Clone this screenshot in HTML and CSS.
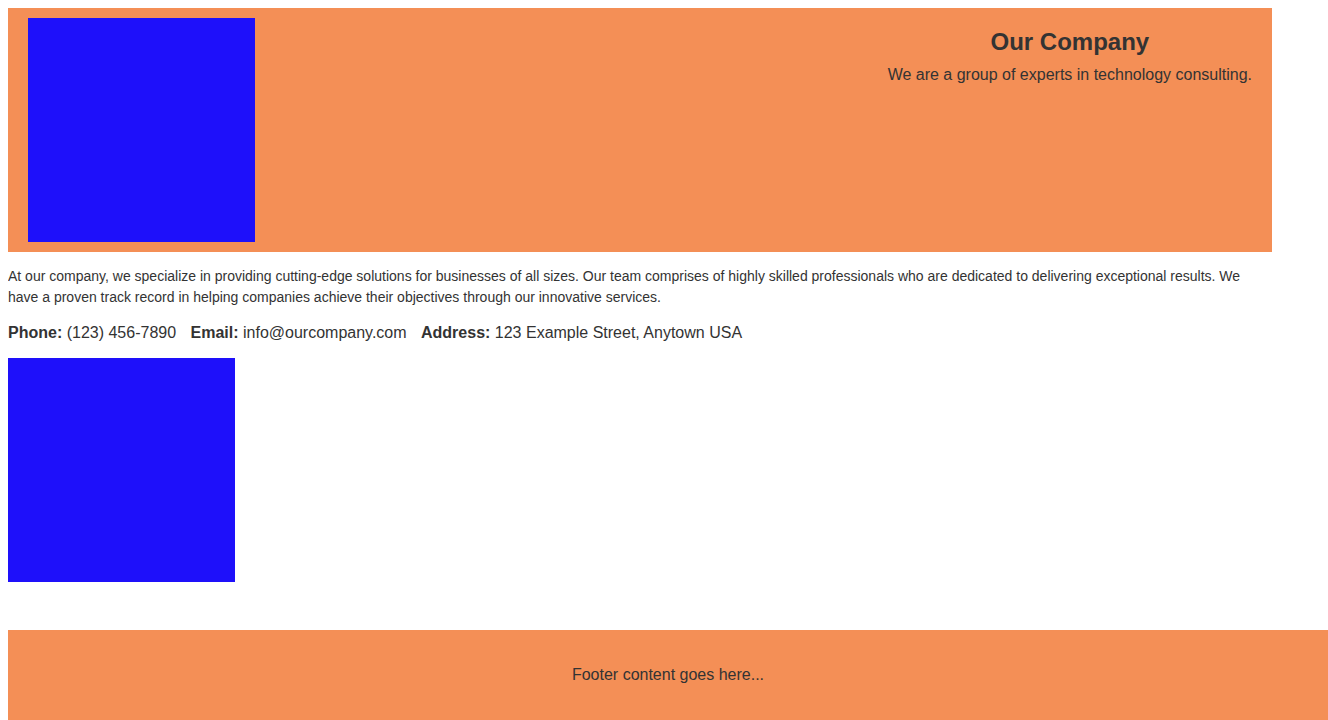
FILE: index.html
```html
<!DOCTYPE html>
<html lang="en">
<head>
<meta charset="utf-8">
<title>Our Company</title>
<link rel="stylesheet" href="styles.css">
</head>
<body>
<header class="site-header">
  <div class="logo"></div>
  <div class="brand">
    <h1 class="brand-title">Our Company</h1>
    <p class="brand-tagline">We are a group of experts in technology consulting.</p>
  </div>
</header>
<main class="content">
  <p class="intro">At our company, we specialize in providing cutting-edge solutions for businesses of all sizes. Our team comprises of highly skilled professionals who are dedicated to delivering exceptional results. We have a proven track record in helping companies achieve their objectives through our innovative services.</p>
  <p class="contact"><span class="contact-item"><strong>Phone:</strong> (123) 456-7890</span> <span class="contact-item"><strong>Email:</strong> info@ourcompany.com</span> <span class="contact-item"><strong>Address:</strong> 123 Example Street, Anytown USA</span></p>
  <div class="picture"></div>
</main>
<footer class="site-footer">
  <p class="footer-text">Footer content goes here...</p>
</footer>
</body>
</html>
```
FILE: styles.css
```css
html, body {
  background: #ffffff;
}
body {
  margin: 8px;
  font-family: "Liberation Sans", Arial, sans-serif;
  color: #333333;
}
.site-header {
  width: 1264px;
  box-sizing: border-box;
  background: #f48f56;
  padding: 10px 20px;
  display: flex;
  justify-content: space-between;
  align-items: flex-start;
}
.logo {
  width: 227px;
  height: 224px;
  background: #1e10fa;
}
.brand {
  text-align: center;
}
.brand-title {
  font-size: 24px;
  font-weight: bold;
  margin: 10px 0 0;
}
.brand-tagline {
  font-size: 16px;
  margin: 10px 0 0;
}
.content {
  width: 1264px;
}
.intro {
  font-size: 14px;
  line-height: 21px;
  margin: 14px 0 16px;
}
.contact {
  font-size: 16px;
  margin: 16px 0;
}
.contact-item {
  margin-right: 10px;
}
.picture {
  width: 227px;
  height: 224px;
  background: #1e10fa;
}
.site-footer {
  position: fixed;
  left: 8px;
  right: 0;
  bottom: 0;
  height: 90px;
  background: #f48f56;
  display: flex;
  align-items: center;
  justify-content: center;
}
.footer-text {
  font-size: 16px;
  margin: 0;
}
```
